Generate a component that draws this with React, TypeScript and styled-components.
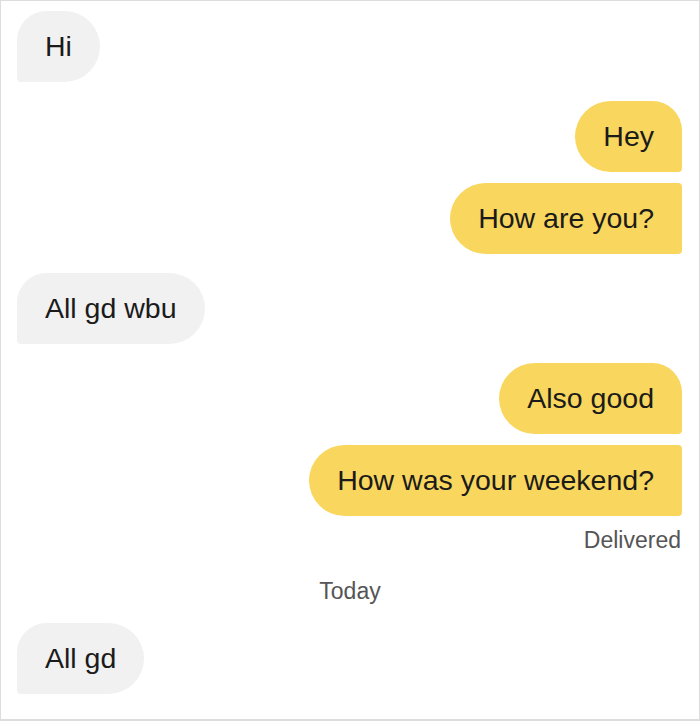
import React from "react";
import styled, { createGlobalStyle, css } from "styled-components";

const Global = createGlobalStyle`
  html, body { margin: 0; padding: 0; background: #ffffff; }
  * { box-sizing: border-box; }
`;

const Frame = styled.div`
  width: 700px;
  height: 721px;
  border: 1px solid #dddddd;
  border-bottom-width: 2px;
  background: #ffffff;
  padding: 10px 17px 0 16px;
  display: flex;
  flex-direction: column;
  font-family: "Liberation Sans", Arial, sans-serif;
  color: #1b1b1b;
  overflow: hidden;
`;

const Group = styled.div<{ $side: "in" | "out" }>`
  display: flex;
  flex-direction: column;
  align-items: ${(p) => (p.$side === "in" ? "flex-start" : "flex-end")};
  gap: 11px;
  & + & { margin-top: 19px; }
`;

type Shape = "first" | "rest";

const Bubble = styled.div<{ $side: "in" | "out"; $shape: Shape }>`
  height: 71px;
  line-height: 71px;
  padding: 0 28px;
  font-size: 28.5px;
  white-space: nowrap;
  ${(p) =>
    p.$side === "in"
      ? css`
          background: #f1f1f1;
          border-radius: 30px 36px 36px 4px;
        `
      : css`
          background: #f9d65d;
          border-radius: ${p.$shape === "first"
            ? "36px 30px 4px 36px"
            : "36px 4px 4px 36px"};
        `}
`;

const Status = styled.div`
  align-self: flex-end;
  margin-top: 11px;
  font-size: 23px;
  line-height: 26px;
  color: #555555;
  margin-right: 1px;
`;

const DayLabel = styled.div`
  align-self: center;
  margin-top: 25px;
  margin-bottom: 19px;
  font-size: 23px;
  line-height: 26px;
  color: #555555;
  margin-left: 1px;
`;

type Msg = { side: "in" | "out"; texts: string[] };

const before: Msg[] = [
  { side: "in", texts: ["Hi"] },
  { side: "out", texts: ["Hey", "How are you?"] },
  { side: "in", texts: ["All gd wbu"] },
  { side: "out", texts: ["Also good", "How was your weekend?"] },
];

const renderGroup = (g: Msg, i: number) => (
  <Group key={i} $side={g.side}>
    {g.texts.map((t, j) => (
      <Bubble key={j} $side={g.side} $shape={j === 0 ? "first" : "rest"}>
        {t}
      </Bubble>
    ))}
  </Group>
);

export default function App() {
  return (
    <>
      <Global />
      <Frame>
        {before.map(renderGroup)}
        <Status>Delivered</Status>
        <DayLabel>Today</DayLabel>
        {renderGroup({ side: "in", texts: ["All gd"] }, 99)}
      </Frame>
    </>
  );
}
